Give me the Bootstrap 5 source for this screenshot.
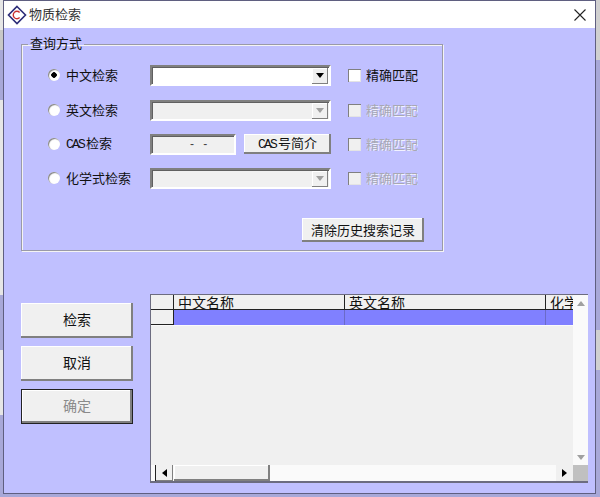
<!DOCTYPE html>
<html lang="zh">
<head>
  <meta charset="UTF-8" />
  <title>物质检索</title>
  <link href="https://cdn.jsdelivr.net/npm/bootstrap@5.3.0/dist/css/bootstrap.min.css" rel="stylesheet">
  <style>
    html, body { width: 600px; height: 497px; overflow: hidden; }
    body {
      background-color: #a8a8d8;
      background-image:
        linear-gradient(#e6e6e6 0 30px, #c8c8c8 30px 50px, #a8a8d8 50px 100px, #e6e6e6 100px 295px, #a8a8d8 295px 350px, #e6e6e6 350px 415px, #a8a8d8 415px),
        linear-gradient(#d0d0d0 0 60px, #a8a8d8 60px 330px, #d0d0d0 330px 370px, #a8a8d8 370px);
      background-size: 3px 100%, 4px 100%;
      background-position: left top, right top;
      background-repeat: no-repeat;
      font-family: "Liberation Sans", "Noto Sans CJK SC", sans-serif;
      font-size: 13px;
      color: #111;
      line-height: 1;
    }
    .app-window {
      width: 593px;
      height: 494px;
      margin-left: 3px;
      background-color: #c0c0ff;
      border: 1px solid #5f5f80;
    }
    .title-bar {
      height: 27px;
      background-color: #fff;
      padding: 0 8px 0 3px;
      color: #333;
    }
    .title-text { margin-left: 2px; font-size: 13px; }
    .group-box {
      width: 422px;
      height: 217px;
      margin: 6px 0 0 17px;
      padding: 4px 18px 0 26px;
      border: 1px solid #9a9aa8;
      box-shadow: inset 1px 1px 0 #f4f4f4, 1px 1px 0 #f4f4f4;
    }
    .group-title {
      float: none;
      width: auto;
      margin: 0 0 0 -20px;
      padding: 0 2px;
      font-size: 13px;
      line-height: 20px;
    }
    .form-line { height: 34px; }
    .form-line.is-first { margin-bottom: 1px; }
    .opt-radio {
      appearance: none;
      width: 12px;
      height: 12px;
      margin: 0 6px 0 0;
      border-radius: 50%;
      background-color: #fff;
      box-shadow: inset 1px 1px 1px #808080;
      flex: none;
    }
    .opt-radio:checked { background: radial-gradient(circle, #000 2.5px, #fff 3px); }
    .opt-label { width: 84px; font-size: 13px; }
    .latin-narrow { font-family: "Liberation Mono", monospace; font-size: 13px; letter-spacing: -1.8px; margin-right: 2px; }
    .sunken {
      height: 21px;
      background-color: #f0f0f0;
      border: 2px solid;
      border-color: #808080 #fff #fff #808080;
      box-shadow: inset 1px 1px 0 #606060;
    }
    .combo-box { width: 181px; padding: 1px; }
    .combo-box.is-live { background-color: #fff; }
    .combo-arrow {
      width: 16px;
      height: 16px;
      background-color: #f0f0f0;
      box-shadow: inset -1px -1px 0 #808080, inset 1px 1px 0 #fff;
    }
    .arrow-down { width: 0; height: 0; border: 4px solid transparent; border-top: 5px solid #000; border-bottom: 0; }
    .arrow-down.is-off { border-top-color: #a0a0a0; }
    .arrow-up { width: 0; height: 0; border: 4px solid transparent; border-bottom: 5px solid #a0a0a0; border-top: 0; }
    .arrow-left { width: 0; height: 0; border: 4px solid transparent; border-right: 5px solid #000; border-left: 0; }
    .arrow-right { width: 0; height: 0; border: 4px solid transparent; border-left: 5px solid #000; border-right: 0; }
    .match-check {
      appearance: none;
      width: 13px;
      height: 13px;
      margin: 0 5px 0 17px;
      background-color: #fff;
      box-shadow: inset 1px 1px 0 #808080, inset -1px -1px 0 #e4e4e4;
      flex: none;
    }
    .match-check:disabled { background-color: #f0f0f0; }
    .match-text { width: 52px; white-space: nowrap; overflow: hidden; font-size: 13px; }
    .match-text.is-off { color: #a8a8b4; text-shadow: 1px 1px 0 #f2f2ff; }
    .cas-field { width: 86px; padding-left: 38px; font-size: 12px; color: #444; word-spacing: 6px; }
    .win-btn {
      background-color: #f0f0f0;
      border: 0;
      padding: 0;
      color: #111;
      font-size: 13px;
      box-shadow: inset -2px -2px 0 #808080, inset 1px 1px 0 #fff;
    }
    .cas-btn { width: 87px; height: 20px; margin-left: 8px; }
    .clear-btn { width: 122px; height: 24px; margin-top: 23px; }
    .lower-area { margin: 43px 0 0 17px; }
    .side-col { width: 112px; padding-top: 9px; gap: 8px; margin-right: 17px; }
    .side-btn { height: 35px; font-size: 14px; padding-bottom: 2px; }
    .side-btn.is-default { outline: 1px solid #222; outline-offset: -1px; color: #8a8a8a; box-shadow: inset -3px -3px 0 #808080, inset 2px 2px 0 #fff; }
    .grid-box {
      width: 438px;
      height: 189px;
      background-color: #f0f0f0;
      border: 1px solid #6c6c80;
      border-bottom-width: 2px;
    }
    .grid-main { width: 422px; }
    .grid-head, .grid-sel { display: grid; grid-template-columns: 23px 171px 201px 27px; }
    .grid-head { height: 15px; border-bottom: 1px solid #222; }
    .head-cell { border-right: 1px solid #222; padding-left: 4px; font-size: 14px; line-height: 17px; height: 15px; overflow: hidden; white-space: nowrap; }
    .head-cell:last-child { border-right: 0; }
    .grid-sel { height: 16px; border-bottom: 1px solid #fafafa; }
    .sel-corner { border-right: 1px solid #222; border-bottom: 1px solid #222; }
    .sel-cell { background-color: #8080ff; border-right: 1px solid #6a6ac8; }
    .sel-cell:last-child { border-right: 0; }
    .scroll-v { width: 15px; background-color: #fafafa; }
    .scroll-end { height: 16px; }
    .scroll-h { height: 16px; background-color: #fafafa; padding-left: 4px; }
    .scroll-btn { width: 18px; border-left: 1px solid #222; background-color: #f0f0f0; box-shadow: inset -1px -1px 0 #808080; }
    .scroll-thumb { width: 96px; background-color: #f0f0f0; box-shadow: inset -2px -2px 0 #808080, inset 1px 1px 0 #fff; margin-left: 1px; }
    .scroll-right { width: 17px; background-color: #f0f0f0; }
    .scroll-corner { width: 15px; height: 16px; background-color: #c0c0c0; }
  </style>
</head>
<body>

<div class="app-window">
  <div class="title-bar d-flex align-items-center">
    <svg width="20" height="20" viewBox="0 0 20 20">
      <path d="M10 1.5 18.5 10 10 18.5 1.5 10Z" fill="#fff" stroke="#2c2c78" stroke-width="1.6"/>
      <path d="M12.6 7.4A3.7 3.7 0 1 0 12.6 12.6" fill="none" stroke="#c83030" stroke-width="1.4"/>
    </svg>
    <span class="title-text">物质检索</span>
    <svg class="ms-auto" width="14" height="14" viewBox="0 0 14 14">
      <path d="M1.5 1.5 12.5 12.5M12.5 1.5 1.5 12.5" stroke="#222" stroke-width="1.1"/>
    </svg>
  </div>

  <fieldset class="group-box">
    <legend class="group-title">查询方式</legend>

    <div class="form-line is-first d-flex align-items-center">
      <input class="opt-radio" type="radio" name="mode" checked>
      <span class="opt-label">中文检索</span>
      <div class="sunken combo-box is-live d-flex justify-content-end">
        <div class="combo-arrow d-flex align-items-center justify-content-center"><div class="arrow-down"></div></div>
      </div>
      <input class="match-check" type="checkbox">
      <span class="match-text">精确匹配</span>
    </div>

    <div class="form-line d-flex align-items-center">
      <input class="opt-radio" type="radio" name="mode">
      <span class="opt-label">英文检索</span>
      <div class="sunken combo-box d-flex justify-content-end">
        <div class="combo-arrow d-flex align-items-center justify-content-center"><div class="arrow-down is-off"></div></div>
      </div>
      <input class="match-check" type="checkbox" disabled>
      <span class="match-text is-off">精确匹配</span>
    </div>

    <div class="form-line d-flex align-items-center">
      <input class="opt-radio" type="radio" name="mode">
      <span class="opt-label"><span class="latin-narrow">CAS</span>检索</span>
      <div class="sunken cas-field d-flex align-items-center">- -</div>
      <button class="win-btn cas-btn" type="button"><span class="latin-narrow">CAS</span>号简介</button>
      <input class="match-check" type="checkbox" disabled>
      <span class="match-text is-off">精确匹配</span>
    </div>

    <div class="form-line d-flex align-items-center">
      <input class="opt-radio" type="radio" name="mode">
      <span class="opt-label">化学式检索</span>
      <div class="sunken combo-box d-flex justify-content-end">
        <div class="combo-arrow d-flex align-items-center justify-content-center"><div class="arrow-down is-off"></div></div>
      </div>
      <input class="match-check" type="checkbox" disabled>
      <span class="match-text is-off">精确匹配</span>
    </div>

    <div class="d-flex justify-content-end">
      <button class="win-btn clear-btn" type="button">清除历史搜索记录</button>
    </div>
  </fieldset>

  <div class="lower-area d-flex">
    <div class="side-col d-flex flex-column">
      <button class="win-btn side-btn" type="button">检索</button>
      <button class="win-btn side-btn" type="button">取消</button>
      <button class="win-btn side-btn is-default" type="button">确定</button>
    </div>

    <div class="grid-box d-flex">
      <div class="grid-main d-flex flex-column">
        <div class="grid-head">
          <div class="head-cell"></div>
          <div class="head-cell">中文名称</div>
          <div class="head-cell">英文名称</div>
          <div class="head-cell">化学式</div>
        </div>
        <div class="grid-sel">
          <div class="sel-corner"></div>
          <div class="sel-cell"></div>
          <div class="sel-cell"></div>
          <div class="sel-cell"></div>
        </div>
        <div class="flex-grow-1"></div>
        <div class="scroll-h d-flex">
          <div class="scroll-btn d-flex align-items-center justify-content-center"><div class="arrow-left"></div></div>
          <div class="scroll-thumb"></div>
          <div class="scroll-right ms-auto d-flex align-items-center justify-content-center"><div class="arrow-right"></div></div>
        </div>
      </div>
      <div class="scroll-v d-flex flex-column">
        <div class="scroll-end d-flex align-items-center justify-content-center"><div class="arrow-up"></div></div>
        <div class="flex-grow-1"></div>
        <div class="scroll-end d-flex align-items-center justify-content-center"><div class="arrow-down is-off"></div></div>
        <div class="scroll-corner"></div>
      </div>
    </div>
  </div>
</div>

<script src="https://cdn.jsdelivr.net/npm/bootstrap@5.3.0/dist/js/bootstrap.bundle.min.js"></script>
</body>
</html>
